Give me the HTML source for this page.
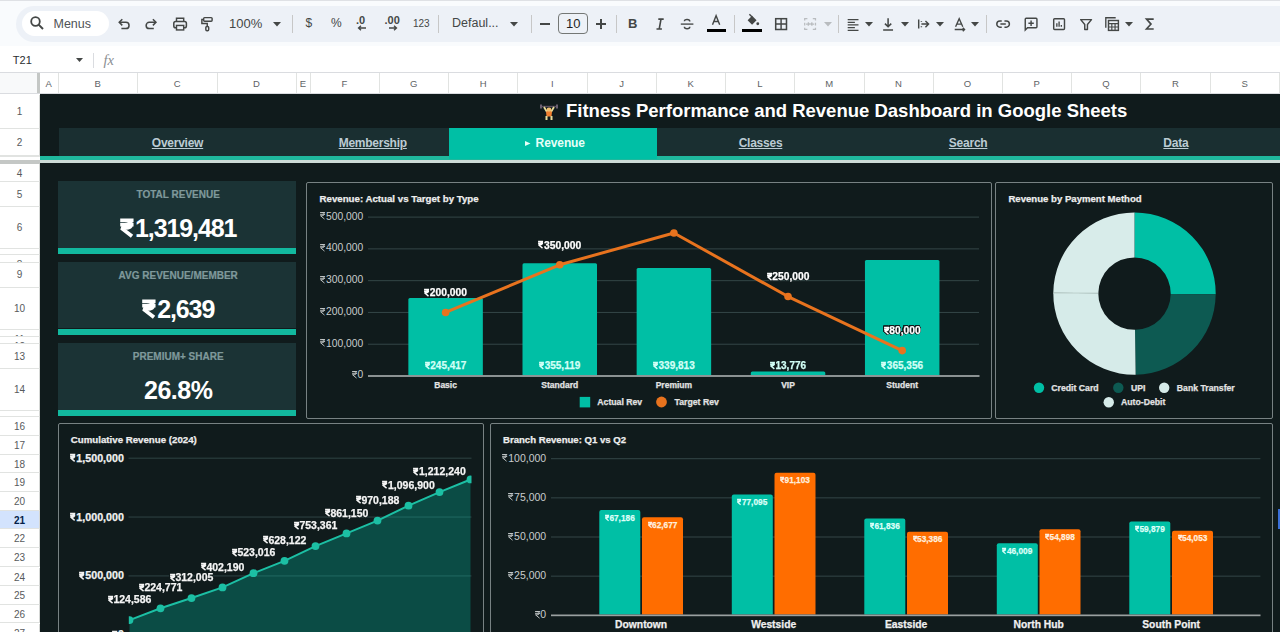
<!DOCTYPE html><html><head><meta charset="utf-8"><style>
*{margin:0;padding:0;box-sizing:border-box}
html,body{width:1280px;height:632px;overflow:hidden;background:#fff;font-family:"Liberation Sans",sans-serif}
.a{position:absolute}
.t{position:absolute;white-space:nowrap;line-height:1}
svg{display:block}
.rp{display:inline-block}
</style></head><body>

<div class="a" style="left:0;top:0;width:1280px;height:1px;background:#dfe1e5"></div>
<div class="a" style="left:0;top:1px;width:1280px;height:45px;background:#f9fbfd"></div>
<div class="a" style="left:16px;top:6px;width:1300px;height:36px;border-radius:18px;background:#edf1f7"></div>
<div class="a" style="left:22px;top:11px;width:87px;height:25px;border-radius:13px;background:#fff"></div>
<svg class="a" style="left:29px;top:15px" width="16" height="16" viewBox="0 0 16 16"><circle cx="6.5" cy="6.5" r="4.3" fill="none" stroke="#444746" stroke-width="1.8"/><path d="M9.6,9.6 L14,14" stroke="#444746" stroke-width="2"/></svg>
<div class="t" style="left:53.5px;top:17.5px;font-size:12.5px;color:#4f5356">Menus</div>
<svg class="a" style="left:116.4px;top:16.3px" width="16.2" height="16.2" viewBox="0 0 18 18"><path d="M4,7 H11 A3.5,3.5 0 0 1 11,14 H6" fill="none" stroke="#444746" stroke-width="1.7"/><path d="M7,3.6 L3.6,7 L7,10.4" fill="none" stroke="#444746" stroke-width="1.7"/></svg>
<svg class="a" style="left:143.4px;top:16.3px" width="16.2" height="16.2" viewBox="0 0 18 18"><path d="M14,7 H7 A3.5,3.5 0 0 0 7,14 H12" fill="none" stroke="#444746" stroke-width="1.7"/><path d="M11,3.6 L14.4,7 L11,10.4" fill="none" stroke="#444746" stroke-width="1.7"/></svg>
<svg class="a" style="left:171.9px;top:16.3px" width="16.2" height="16.2" viewBox="0 0 18 18"><path d="M5,6 V2.5 H13 V6" fill="none" stroke="#444746" stroke-width="1.6"/><rect x="2" y="6" width="14" height="7" rx="2" fill="none" stroke="#444746" stroke-width="1.7"/><rect x="5" y="10.5" width="8" height="5" fill="#edf1f7" stroke="#444746" stroke-width="1.6"/></svg>
<svg class="a" style="left:197.9px;top:16.3px" width="16.2" height="16.2" viewBox="0 0 18 18"><rect x="6.3" y="1.8" width="9.4" height="4" rx="1" fill="none" stroke="#444746" stroke-width="1.6"/><path d="M6.3,3.8 H4.3 V8.3 H10.3 V11.6" fill="none" stroke="#444746" stroke-width="1.6"/><rect x="8.7" y="11.6" width="3.2" height="4.8" rx="1.3" fill="none" stroke="#444746" stroke-width="1.6"/></svg>
<div class="t" style="left:229px;top:17px;font-size:13px;color:#444746">100%</div>
<svg class="a" style="left:272.5px;top:21.5px" width="8" height="5" viewBox="0 0 8 5"><path d="M0,0 H8 L4,4.5Z" fill="#444746"/></svg>
<div class="a" style="left:292px;top:15px;width:1px;height:18px;background:#c7c7c7"></div>
<div class="t" style="left:305.5px;top:17px;font-size:12px;color:#444746">$</div>
<div class="t" style="left:331px;top:17px;font-size:12px;color:#444746">%</div>
<div class="t" style="left:356px;top:15px;font-size:11px;font-weight:bold;color:#444746">.0</div>
<svg class="a" style="left:357px;top:25px" width="10" height="6" viewBox="0 0 10 6"><path d="M9,3 H2 M4,0.8 L1.5,3 L4,5.2" fill="none" stroke="#444746" stroke-width="1.3"/></svg>
<div class="t" style="left:384.5px;top:15px;font-size:11px;font-weight:bold;color:#444746">.00</div>
<svg class="a" style="left:388px;top:25px" width="10" height="6" viewBox="0 0 10 6"><path d="M1,3 H8 M6,0.8 L8.5,3 L6,5.2" fill="none" stroke="#444746" stroke-width="1.3"/></svg>
<div class="t" style="left:413px;top:18.5px;font-size:10px;color:#444746">123</div>
<div class="a" style="left:438px;top:15px;width:1px;height:18px;background:#c7c7c7"></div>
<div class="t" style="left:452px;top:17px;font-size:12.5px;color:#444746">Defaul...</div>
<svg class="a" style="left:510px;top:21.5px" width="8" height="5" viewBox="0 0 8 5"><path d="M0,0 H8 L4,4.5Z" fill="#444746"/></svg>
<div class="a" style="left:530.5px;top:15px;width:1px;height:18px;background:#c7c7c7"></div>
<div class="a" style="left:540px;top:23px;width:9.5px;height:1.6px;background:#444746"></div>
<div class="a" style="left:558px;top:13px;width:30px;height:21px;border:1px solid #747775;border-radius:4px"></div>
<div class="t" style="left:566px;top:17px;font-size:13px;color:#1f1f1f">10</div>
<div class="a" style="left:596px;top:23px;width:9.5px;height:1.6px;background:#444746"></div>
<div class="a" style="left:600px;top:18.5px;width:1.6px;height:10px;background:#444746"></div>
<div class="a" style="left:615.5px;top:15px;width:1px;height:18px;background:#c7c7c7"></div>
<div class="t" style="left:628px;top:17px;font-size:13px;font-weight:bold;color:#444746">B</div>
<svg class="a" style="left:651.9px;top:16.3px" width="16.2" height="16.2" viewBox="0 0 18 18"><path d="M7,3.5 H13 M5,14.5 H11 M10,3.5 L8,14.5" fill="none" stroke="#444746" stroke-width="1.8"/></svg>
<svg class="a" style="left:679.4px;top:16.3px" width="16.2" height="16.2" viewBox="0 0 18 18"><path d="M2,9 H16" stroke="#444746" stroke-width="1.5"/><path d="M12,6 C12,3.5 6,3 6,5.8 M6,12 C6,15 12,15 12,12" fill="none" stroke="#444746" stroke-width="1.6"/></svg>
<svg class="a" style="left:708.4px;top:13.4px" width="16.2" height="16.2" viewBox="0 0 18 18"><path d="M5,13 L9,3 L13,13 M6.5,9.5 H11.5" fill="none" stroke="#444746" stroke-width="1.6"/></svg>
<div class="a" style="left:707px;top:29px;width:19px;height:2.6px;background:#000"></div>
<div class="a" style="left:734px;top:15px;width:1px;height:18px;background:#c7c7c7"></div>
<svg class="a" style="left:743.9px;top:12.9px" width="16.2" height="16.2" viewBox="0 0 18 18"><path d="M4,8 L9,3 L14,8 L9,13 Z" fill="#444746"/><path d="M6,1.5 L9,4.5" stroke="#444746" stroke-width="1.6"/><circle cx="15.3" cy="12" r="1.6" fill="#444746"/></svg>
<div class="a" style="left:742px;top:29px;width:20px;height:2.6px;background:#000"></div>
<svg class="a" style="left:772.9px;top:16.3px" width="16.2" height="16.2" viewBox="0 0 18 18"><rect x="3" y="3" width="12" height="12" fill="none" stroke="#444746" stroke-width="1.7"/><path d="M9,3 V15 M3,9 H15" stroke="#444746" stroke-width="1.6"/></svg>
<svg class="a" style="left:801.9px;top:16.3px" width="16.2" height="16.2" viewBox="0 0 18 18"><path d="M3,5 V3 H6 M3,13 V15 H6 M15,5 V3 H12 M15,13 V15 H12 M3,7.5 V10.5 M15,7.5 V10.5 M4.5,9 H8 M6.5,7.3 L8.2,9 L6.5,10.7 M13.5,9 H10 M11.5,7.3 L9.8,9 L11.5,10.7" fill="none" stroke="#b9bcbf" stroke-width="1.4"/></svg>
<svg class="a" style="left:824px;top:21.5px" width="8" height="5" viewBox="0 0 8 5"><path d="M0,0 H8 L4,4.5Z" fill="#b9bcbf"/></svg>
<div class="a" style="left:837.5px;top:15px;width:1px;height:18px;background:#c7c7c7"></div>
<svg class="a" style="left:844.9px;top:16.3px" width="16.2" height="16.2" viewBox="0 0 18 18"><path d="M3,4 H15 M3,7 H11 M3,10 H15 M3,13 H11 M3,16 H15" stroke="#444746" stroke-width="1.4"/></svg>
<svg class="a" style="left:865px;top:21.5px" width="8" height="5" viewBox="0 0 8 5"><path d="M0,0 H8 L4,4.5Z" fill="#444746"/></svg>
<svg class="a" style="left:880.4px;top:16.3px" width="16.2" height="16.2" viewBox="0 0 18 18"><path d="M9,2.5 V12 M5.5,8.5 L9,12 L12.5,8.5 M3.5,15.5 H14.5" fill="none" stroke="#444746" stroke-width="1.7"/></svg>
<svg class="a" style="left:901px;top:21.5px" width="8" height="5" viewBox="0 0 8 5"><path d="M0,0 H8 L4,4.5Z" fill="#444746"/></svg>
<svg class="a" style="left:915.9px;top:16.3px" width="16.2" height="16.2" viewBox="0 0 18 18"><path d="M3,4 V14 M6,9 H14 M10.5,5.5 L14,9 L10.5,12.5 M6,5.5 V6.5 M6,11.5 V12.5" fill="none" stroke="#444746" stroke-width="1.6"/></svg>
<svg class="a" style="left:936px;top:21.5px" width="8" height="5" viewBox="0 0 8 5"><path d="M0,0 H8 L4,4.5Z" fill="#444746"/></svg>
<svg class="a" style="left:951.9px;top:16.3px" width="16.2" height="16.2" viewBox="0 0 18 18"><path d="M4,12 L8,3 L12,12 M5.3,9 H10.7 M3,15 H14 M12,13 L14,15 L12,17" fill="none" stroke="#444746" stroke-width="1.5"/></svg>
<svg class="a" style="left:971px;top:21.5px" width="8" height="5" viewBox="0 0 8 5"><path d="M0,0 H8 L4,4.5Z" fill="#444746"/></svg>
<div class="a" style="left:986px;top:15px;width:1px;height:18px;background:#c7c7c7"></div>
<svg class="a" style="left:994.9px;top:16.3px" width="16.2" height="16.2" viewBox="0 0 18 18"><path d="M7.5,5.5 H5.5 A3.5,3.5 0 0 0 5.5,12.5 H7.5 M10.5,5.5 H12.5 A3.5,3.5 0 0 1 12.5,12.5 H10.5 M6,9 H12" fill="none" stroke="#444746" stroke-width="1.7"/></svg>
<svg class="a" style="left:1022.9px;top:16.3px" width="16.2" height="16.2" viewBox="0 0 18 18"><path d="M2.5,15.5 V3.5 A1,1 0 0 1 3.5,2.5 H14.5 A1,1 0 0 1 15.5,3.5 V12 A1,1 0 0 1 14.5,13 H5 Z" fill="none" stroke="#444746" stroke-width="1.6"/><path d="M9,5 V11 M6,8 H12" stroke="#444746" stroke-width="1.6"/></svg>
<svg class="a" style="left:1050.9px;top:16.3px" width="16.2" height="16.2" viewBox="0 0 18 18"><rect x="3" y="3" width="12" height="12" rx="1" fill="none" stroke="#444746" stroke-width="1.6"/><path d="M6.5,8 V12 M9,6 V12 M11.5,10 V12" stroke="#444746" stroke-width="1.5"/></svg>
<svg class="a" style="left:1078.4px;top:16.3px" width="16.2" height="16.2" viewBox="0 0 18 18"><path d="M3,4 H15 L10.5,9.5 V15 H7.5 V9.5 Z" fill="none" stroke="#444746" stroke-width="1.6" stroke-linejoin="round"/></svg>
<svg class="a" style="left:1103.9px;top:16.3px" width="16.2" height="16.2" viewBox="0 0 18 18"><path d="M2,13 V2 H13" fill="none" stroke="#444746" stroke-width="1.5"/><rect x="5" y="5" width="11" height="11" fill="none" stroke="#444746" stroke-width="1.6"/><path d="M5,8.5 H16 M8.7,8.5 V16 M12.3,8.5 V16 M5,12.2 H16" stroke="#444746" stroke-width="1.3"/></svg>
<svg class="a" style="left:1125px;top:21.5px" width="8" height="5" viewBox="0 0 8 5"><path d="M0,0 H8 L4,4.5Z" fill="#444746"/></svg>
<svg class="a" style="left:1141.9px;top:16.3px" width="16.2" height="16.2" viewBox="0 0 18 18"><path d="M13,3.5 H5 L10,9 L5,14.5 H13" fill="none" stroke="#444746" stroke-width="1.8"/></svg>
<div class="t" style="left:12.8px;top:54.5px;font-size:11px;color:#2b2e31">T21</div>
<svg class="a" style="left:75.5px;top:57.5px" width="7" height="4.5" viewBox="0 0 7 4.5"><path d="M0,0 H7 L3.5,4Z" fill="#444746"/></svg>
<div class="a" style="left:93px;top:53px;width:1px;height:15px;background:#dadce0"></div>
<div class="t" style="left:103.5px;top:52.5px;font-size:14.5px;font-style:italic;font-family:'Liberation Serif',serif;color:#8a8e92">fx</div>
<div class="a" style="left:0;top:72px;width:1280px;height:1px;background:#dadce0"></div>
<div class="a" style="left:0;top:73px;width:37.5px;height:21px;background:#f8f9fa"></div>
<div class="a" style="left:37px;top:73px;width:3px;height:21px;background:#c4c7c5"></div>
<div class="a" style="left:40px;top:73px;width:18.5px;height:21px;border-right:1px solid #e1e3e1;color:#606366;font-size:9.5px;text-align:center;line-height:21px">A</div>
<div class="a" style="left:58.5px;top:73px;width:79.5px;height:21px;border-right:1px solid #e1e3e1;color:#606366;font-size:9.5px;text-align:center;line-height:21px">B</div>
<div class="a" style="left:138px;top:73px;width:79.5px;height:21px;border-right:1px solid #e1e3e1;color:#606366;font-size:9.5px;text-align:center;line-height:21px">C</div>
<div class="a" style="left:217.5px;top:73px;width:79px;height:21px;border-right:1px solid #e1e3e1;color:#606366;font-size:9.5px;text-align:center;line-height:21px">D</div>
<div class="a" style="left:296.5px;top:73px;width:14px;height:21px;border-right:1px solid #e1e3e1;color:#606366;font-size:9.5px;text-align:center;line-height:21px">E</div>
<div class="a" style="left:310.5px;top:73px;width:69px;height:21px;border-right:1px solid #e1e3e1;color:#606366;font-size:9.5px;text-align:center;line-height:21px">F</div>
<div class="a" style="left:379.5px;top:73px;width:69.5px;height:21px;border-right:1px solid #e1e3e1;color:#606366;font-size:9.5px;text-align:center;line-height:21px">G</div>
<div class="a" style="left:449px;top:73px;width:69.25px;height:21px;border-right:1px solid #e1e3e1;color:#606366;font-size:9.5px;text-align:center;line-height:21px">H</div>
<div class="a" style="left:518.25px;top:73px;width:69.25px;height:21px;border-right:1px solid #e1e3e1;color:#606366;font-size:9.5px;text-align:center;line-height:21px">I</div>
<div class="a" style="left:587.5px;top:73px;width:69px;height:21px;border-right:1px solid #e1e3e1;color:#606366;font-size:9.5px;text-align:center;line-height:21px">J</div>
<div class="a" style="left:656.5px;top:73px;width:69.25px;height:21px;border-right:1px solid #e1e3e1;color:#606366;font-size:9.5px;text-align:center;line-height:21px">K</div>
<div class="a" style="left:725.75px;top:73px;width:69.25px;height:21px;border-right:1px solid #e1e3e1;color:#606366;font-size:9.5px;text-align:center;line-height:21px">L</div>
<div class="a" style="left:795px;top:73px;width:69.5px;height:21px;border-right:1px solid #e1e3e1;color:#606366;font-size:9.5px;text-align:center;line-height:21px">M</div>
<div class="a" style="left:864.5px;top:73px;width:69px;height:21px;border-right:1px solid #e1e3e1;color:#606366;font-size:9.5px;text-align:center;line-height:21px">N</div>
<div class="a" style="left:933.5px;top:73px;width:69px;height:21px;border-right:1px solid #e1e3e1;color:#606366;font-size:9.5px;text-align:center;line-height:21px">O</div>
<div class="a" style="left:1002.5px;top:73px;width:69.25px;height:21px;border-right:1px solid #e1e3e1;color:#606366;font-size:9.5px;text-align:center;line-height:21px">P</div>
<div class="a" style="left:1071.75px;top:73px;width:69.5px;height:21px;border-right:1px solid #e1e3e1;color:#606366;font-size:9.5px;text-align:center;line-height:21px">Q</div>
<div class="a" style="left:1141.25px;top:73px;width:69.25px;height:21px;border-right:1px solid #e1e3e1;color:#606366;font-size:9.5px;text-align:center;line-height:21px">R</div>
<div class="a" style="left:1210.5px;top:73px;width:69.5px;height:21px;border-right:1px solid #e1e3e1;color:#606366;font-size:9.5px;text-align:center;line-height:21px">S</div>
<div class="a" style="left:0;top:93px;width:1280px;height:1px;background:#dadce0"></div>
<div class="a" style="left:0;top:94px;width:40px;height:538px;background:#fff"></div>
<div class="a" style="left:0;top:94.5px;width:40px;height:34.2px;background:#fff;border-bottom:1px solid #e1e3e1;border-right:1px solid #d5d7d5;color:#575a5c;font-weight:normal;font-size:10px;text-align:center;line-height:34.2px;overflow:hidden">1</div>
<div class="a" style="left:0;top:128.7px;width:40px;height:27.8px;background:#fff;border-bottom:1px solid #e1e3e1;border-right:1px solid #d5d7d5;color:#575a5c;font-weight:normal;font-size:10px;text-align:center;line-height:27.8px;overflow:hidden">2</div>
<div class="a" style="left:0;top:163.5px;width:40px;height:18px;background:#fff;border-bottom:1px solid #e1e3e1;border-right:1px solid #d5d7d5;color:#575a5c;font-weight:normal;font-size:10px;text-align:center;line-height:20px;overflow:hidden">4</div>
<div class="a" style="left:0;top:181.5px;width:40px;height:25.2px;background:#fff;border-bottom:1px solid #e1e3e1;border-right:1px solid #d5d7d5;color:#575a5c;font-weight:normal;font-size:10px;text-align:center;line-height:25.2px;overflow:hidden">5</div>
<div class="a" style="left:0;top:206.7px;width:40px;height:42px;background:#fff;border-bottom:1px solid #e1e3e1;border-right:1px solid #d5d7d5;color:#575a5c;font-weight:normal;font-size:10px;text-align:center;line-height:42px;overflow:hidden">6</div>
<div class="a" style="left:0;top:248.7px;width:40px;height:6.4px;background:#fff;border-bottom:1px solid #e1e3e1;border-right:1px solid #d5d7d5;color:#575a5c;font-weight:normal;font-size:10px;text-align:center;line-height:20px;overflow:hidden">7</div>
<div class="a" style="left:0;top:255.1px;width:40px;height:7.9px;background:#fff;border-bottom:1px solid #e1e3e1;border-right:1px solid #d5d7d5;color:#575a5c;font-weight:normal;font-size:10px;text-align:center;line-height:20px;overflow:hidden">8</div>
<div class="a" style="left:0;top:263px;width:40px;height:24.7px;background:#fff;border-bottom:1px solid #e1e3e1;border-right:1px solid #d5d7d5;color:#575a5c;font-weight:normal;font-size:10px;text-align:center;line-height:24.7px;overflow:hidden">9</div>
<div class="a" style="left:0;top:287.7px;width:40px;height:42.2px;background:#fff;border-bottom:1px solid #e1e3e1;border-right:1px solid #d5d7d5;color:#575a5c;font-weight:normal;font-size:10px;text-align:center;line-height:42.2px;overflow:hidden">10</div>
<div class="a" style="left:0;top:329.9px;width:40px;height:6.7px;background:#fff;border-bottom:1px solid #e1e3e1;border-right:1px solid #d5d7d5;color:#575a5c;font-weight:normal;font-size:10px;text-align:center;line-height:20px;overflow:hidden">11</div>
<div class="a" style="left:0;top:336.6px;width:40px;height:7.2px;background:#fff;border-bottom:1px solid #e1e3e1;border-right:1px solid #d5d7d5;color:#575a5c;font-weight:normal;font-size:10px;text-align:center;line-height:20px;overflow:hidden">12</div>
<div class="a" style="left:0;top:343.8px;width:40px;height:25.1px;background:#fff;border-bottom:1px solid #e1e3e1;border-right:1px solid #d5d7d5;color:#575a5c;font-weight:normal;font-size:10px;text-align:center;line-height:25.1px;overflow:hidden">13</div>
<div class="a" style="left:0;top:368.9px;width:40px;height:42.3px;background:#fff;border-bottom:1px solid #e1e3e1;border-right:1px solid #d5d7d5;color:#575a5c;font-weight:normal;font-size:10px;text-align:center;line-height:42.3px;overflow:hidden">14</div>
<div class="a" style="left:0;top:411.2px;width:40px;height:5.7px;background:#fff;border-bottom:1px solid #e1e3e1;border-right:1px solid #d5d7d5;color:#575a5c;font-weight:normal;font-size:10px;text-align:center;line-height:20px;overflow:hidden">15</div>
<div class="a" style="left:0;top:416.9px;width:40px;height:19.1px;background:#fff;border-bottom:1px solid #e1e3e1;border-right:1px solid #d5d7d5;color:#575a5c;font-weight:normal;font-size:10px;text-align:center;line-height:20px;overflow:hidden">16</div>
<div class="a" style="left:0;top:436px;width:40px;height:18.7px;background:#fff;border-bottom:1px solid #e1e3e1;border-right:1px solid #d5d7d5;color:#575a5c;font-weight:normal;font-size:10px;text-align:center;line-height:20px;overflow:hidden">17</div>
<div class="a" style="left:0;top:454.7px;width:40px;height:18.5px;background:#fff;border-bottom:1px solid #e1e3e1;border-right:1px solid #d5d7d5;color:#575a5c;font-weight:normal;font-size:10px;text-align:center;line-height:20px;overflow:hidden">18</div>
<div class="a" style="left:0;top:473.2px;width:40px;height:18.7px;background:#fff;border-bottom:1px solid #e1e3e1;border-right:1px solid #d5d7d5;color:#575a5c;font-weight:normal;font-size:10px;text-align:center;line-height:20px;overflow:hidden">19</div>
<div class="a" style="left:0;top:491.9px;width:40px;height:18.8px;background:#fff;border-bottom:1px solid #e1e3e1;border-right:1px solid #d5d7d5;color:#575a5c;font-weight:normal;font-size:10px;text-align:center;line-height:20px;overflow:hidden">20</div>
<div class="a" style="left:0;top:510.7px;width:40px;height:18.7px;background:#d3e3fd;border-bottom:1px solid #e1e3e1;border-right:1px solid #d5d7d5;color:#041e49;font-weight:bold;font-size:10px;text-align:center;line-height:20px;overflow:hidden">21</div>
<div class="a" style="left:0;top:529.4px;width:40px;height:18.9px;background:#fff;border-bottom:1px solid #e1e3e1;border-right:1px solid #d5d7d5;color:#575a5c;font-weight:normal;font-size:10px;text-align:center;line-height:20px;overflow:hidden">22</div>
<div class="a" style="left:0;top:548.3px;width:40px;height:19.2px;background:#fff;border-bottom:1px solid #e1e3e1;border-right:1px solid #d5d7d5;color:#575a5c;font-weight:normal;font-size:10px;text-align:center;line-height:20px;overflow:hidden">23</div>
<div class="a" style="left:0;top:567.5px;width:40px;height:18.5px;background:#fff;border-bottom:1px solid #e1e3e1;border-right:1px solid #d5d7d5;color:#575a5c;font-weight:normal;font-size:10px;text-align:center;line-height:20px;overflow:hidden">24</div>
<div class="a" style="left:0;top:586px;width:40px;height:18.9px;background:#fff;border-bottom:1px solid #e1e3e1;border-right:1px solid #d5d7d5;color:#575a5c;font-weight:normal;font-size:10px;text-align:center;line-height:20px;overflow:hidden">25</div>
<div class="a" style="left:0;top:604.9px;width:40px;height:18.6px;background:#fff;border-bottom:1px solid #e1e3e1;border-right:1px solid #d5d7d5;color:#575a5c;font-weight:normal;font-size:10px;text-align:center;line-height:20px;overflow:hidden">26</div>
<div class="a" style="left:0;top:623.5px;width:40px;height:18.6px;background:#fff;border-bottom:1px solid #e1e3e1;border-right:1px solid #d5d7d5;color:#575a5c;font-weight:normal;font-size:10px;text-align:center;line-height:20px;overflow:hidden">27</div>
<div class="a" style="left:0;top:156px;width:40px;height:1px;background:#e1e3e1"></div>
<div class="a" style="left:0;top:157px;width:40px;height:2.3px;background:#fff"></div>
<div class="a" style="left:0;top:159.5px;width:40px;height:4px;background:#c4c7c5"></div>
<div class="a" style="left:40px;top:94px;width:1240px;height:538px;background:#101b1c"></div>
<div class="t" style="left:566px;top:102px;font-size:18.5px;font-weight:bold;color:#fff">Fitness Performance and Revenue Dashboard in Google Sheets</div>
<svg class="a" style="left:539.5px;top:102.5px" width="18" height="17.5" viewBox="0 0 18 17.5"><path d="M0.5,3.5 L17.5,3.5" stroke="#5a5060" stroke-width="1.4"/><rect x="0" y="1.5" width="2" height="4" fill="#6a6070"/><rect x="16" y="1.5" width="2" height="4" fill="#6a6070"/><path d="M4,4 L7,9 M14,4 L11,9" stroke="#e8dc9a" stroke-width="1.8"/><circle cx="9" cy="7" r="2.4" fill="#f0c070"/><path d="M6,8.5 H12 L11.5,13.5 H6.5 Z" fill="#f08030"/><path d="M6.5,13 V17 M11.5,13 V17" stroke="#e8dc9a" stroke-width="2"/></svg>
<div class="a" style="left:58.5px;top:128.2px;width:1221.5px;height:27.8px;background:#1a2f31"></div>
<div class="t" style="left:58.5px;top:136.5px;width:238px;text-align:center;font-size:12px;letter-spacing:-0.25px;font-weight:bold;color:#bccbd3;text-decoration:underline">Overview</div>
<div class="t" style="left:296.5px;top:136.5px;width:152.5px;text-align:center;font-size:12px;letter-spacing:-0.25px;font-weight:bold;color:#bccbd3;text-decoration:underline">Membership</div>
<div class="a" style="left:449px;top:128.2px;width:207.5px;height:31px;background:#00bfa5"></div>
<svg class="a" style="left:525.3px;top:140.5px" width="5.5" height="5" viewBox="0 0 5.5 5"><path d="M0,0 L5.5,2.5 L0,5 Z" fill="#e6fff8"/></svg>
<div class="t" style="left:535.6px;top:136.5px;font-size:12px;letter-spacing:-0.1px;font-weight:bold;color:#e6fff8">Revenue</div>
<div class="t" style="left:656.5px;top:136.5px;width:208px;text-align:center;font-size:12px;letter-spacing:-0.25px;font-weight:bold;color:#bccbd3;text-decoration:underline">Classes</div>
<div class="t" style="left:864.5px;top:136.5px;width:207.25px;text-align:center;font-size:12px;letter-spacing:-0.25px;font-weight:bold;color:#bccbd3;text-decoration:underline">Search</div>
<div class="t" style="left:1071.75px;top:136.5px;width:208.25px;text-align:center;font-size:12px;letter-spacing:-0.25px;font-weight:bold;color:#bccbd3;text-decoration:underline">Data</div>
<div class="a" style="left:40px;top:156px;width:1240px;height:4px;background:#1fb89d"></div>
<div class="a" style="left:449px;top:156px;width:207.5px;height:3px;background:#00bfa5"></div>
<div class="a" style="left:40px;top:160px;width:1240px;height:3px;background:#cddbd7"></div>
<div class="a" style="left:58px;top:180.6px;width:238px;height:67px;background:#1b3335"></div>
<div class="a" style="left:58px;top:247.6px;width:238px;height:6.8px;background:#12b89e"></div>
<div class="t" style="left:59.2px;top:189.7px;width:238px;text-align:center;font-size:10px;font-weight:bold;color:#7f999b;-webkit-text-stroke:0.2px #7f999b">TOTAL REVENUE</div>
<div class="t" style="left:59.2px;top:215.54px;width:238px;text-align:center;font-size:25px;font-weight:bold;color:#fff;letter-spacing:-1.1px"><svg class="rp" width="13.75" height="18" viewBox="0 0 13.5 18" preserveAspectRatio="none" style="overflow:visible;margin-right:1.25px"><path d="M0.2,1.25 H13.3 M0.2,5.6 H13.3 M4.5,1.25 C10,1.25 10.9,3.6 10.9,5.6 C10.9,7.6 9.2,9.1 5.2,9.1 H1.4 L11.8,17.2" fill="none" stroke="#fff" stroke-width="3.7" stroke-linejoin="bevel"/></svg>1,319,481</div>
<div class="a" style="left:58px;top:261.7px;width:238px;height:66.8px;background:#1b3335"></div>
<div class="a" style="left:58px;top:328.5px;width:238px;height:6.8px;background:#12b89e"></div>
<div class="t" style="left:59.2px;top:270.8px;width:238px;text-align:center;font-size:10px;font-weight:bold;color:#7f999b;-webkit-text-stroke:0.2px #7f999b">AVG REVENUE/MEMBER</div>
<div class="t" style="left:59.2px;top:296.64px;width:238px;text-align:center;font-size:25px;font-weight:bold;color:#fff;letter-spacing:-1.1px"><svg class="rp" width="13.75" height="18" viewBox="0 0 13.5 18" preserveAspectRatio="none" style="overflow:visible;margin-right:1.25px"><path d="M0.2,1.25 H13.3 M0.2,5.6 H13.3 M4.5,1.25 C10,1.25 10.9,3.6 10.9,5.6 C10.9,7.6 9.2,9.1 5.2,9.1 H1.4 L11.8,17.2" fill="none" stroke="#fff" stroke-width="3.7" stroke-linejoin="bevel"/></svg>2,639</div>
<div class="a" style="left:58px;top:342.8px;width:238px;height:67.3px;background:#1b3335"></div>
<div class="a" style="left:58px;top:410.1px;width:238px;height:6.3px;background:#12b89e"></div>
<div class="t" style="left:59.2px;top:351.9px;width:238px;text-align:center;font-size:10px;font-weight:bold;color:#7f999b;-webkit-text-stroke:0.2px #7f999b">PREMIUM+ SHARE</div>
<div class="t" style="left:59.2px;top:377.74px;width:238px;text-align:center;font-size:25px;font-weight:bold;color:#fff;letter-spacing:-0.5px">26.8%</div>
<div class="a" style="left:306px;top:182px;width:686px;height:237px;border:1px solid #788283;border-radius:2px"></div>
<div class="a" style="left:995px;top:182px;width:278px;height:237px;border:1px solid #788283;border-radius:2px"></div>
<div class="a" style="left:58px;top:423px;width:426px;height:217px;border:1px solid #788283;border-radius:2px"></div>
<div class="a" style="left:490px;top:423px;width:783px;height:217px;border:1px solid #788283;border-radius:2px"></div>
<div class="a" style="left:1278.3px;top:508.5px;width:1.7px;height:20.5px;background:#3a6fd8"></div>
<div class="t" style="left:319.5px;top:194.49px;font-size:9.7px;color:#eeeeee;font-weight:bold;-webkit-text-stroke:0.25px #eeeeee;">Revenue: Actual vs Target by Type</div>
<div class="t" style="left:63.3px;width:300px;text-align:right;top:370.48px;font-size:10.3px;color:#c9cdcd;font-weight:normal;"><svg class="rp" width="5.15" height="7.42" viewBox="0 0 13.5 18" preserveAspectRatio="none" style="overflow:visible;margin-right:0.52px"><path d="M0.2,1.25 H13.3 M0.2,5.6 H13.3 M4.5,1.25 C10,1.25 10.9,3.6 10.9,5.6 C10.9,7.6 9.2,9.1 5.2,9.1 H1.4 L11.8,17.2" fill="none" stroke="#c9cdcd" stroke-width="2.3" stroke-linejoin="bevel"/></svg>0</div>
<div class="t" style="left:63.3px;width:300px;text-align:right;top:338.7px;font-size:10.3px;color:#c9cdcd;font-weight:normal;"><svg class="rp" width="5.15" height="7.42" viewBox="0 0 13.5 18" preserveAspectRatio="none" style="overflow:visible;margin-right:0.52px"><path d="M0.2,1.25 H13.3 M0.2,5.6 H13.3 M4.5,1.25 C10,1.25 10.9,3.6 10.9,5.6 C10.9,7.6 9.2,9.1 5.2,9.1 H1.4 L11.8,17.2" fill="none" stroke="#c9cdcd" stroke-width="2.3" stroke-linejoin="bevel"/></svg>100,000</div>
<div class="t" style="left:63.3px;width:300px;text-align:right;top:306.92px;font-size:10.3px;color:#c9cdcd;font-weight:normal;"><svg class="rp" width="5.15" height="7.42" viewBox="0 0 13.5 18" preserveAspectRatio="none" style="overflow:visible;margin-right:0.52px"><path d="M0.2,1.25 H13.3 M0.2,5.6 H13.3 M4.5,1.25 C10,1.25 10.9,3.6 10.9,5.6 C10.9,7.6 9.2,9.1 5.2,9.1 H1.4 L11.8,17.2" fill="none" stroke="#c9cdcd" stroke-width="2.3" stroke-linejoin="bevel"/></svg>200,000</div>
<div class="t" style="left:63.3px;width:300px;text-align:right;top:275.14px;font-size:10.3px;color:#c9cdcd;font-weight:normal;"><svg class="rp" width="5.15" height="7.42" viewBox="0 0 13.5 18" preserveAspectRatio="none" style="overflow:visible;margin-right:0.52px"><path d="M0.2,1.25 H13.3 M0.2,5.6 H13.3 M4.5,1.25 C10,1.25 10.9,3.6 10.9,5.6 C10.9,7.6 9.2,9.1 5.2,9.1 H1.4 L11.8,17.2" fill="none" stroke="#c9cdcd" stroke-width="2.3" stroke-linejoin="bevel"/></svg>300,000</div>
<div class="t" style="left:63.3px;width:300px;text-align:right;top:243.36px;font-size:10.3px;color:#c9cdcd;font-weight:normal;"><svg class="rp" width="5.15" height="7.42" viewBox="0 0 13.5 18" preserveAspectRatio="none" style="overflow:visible;margin-right:0.52px"><path d="M0.2,1.25 H13.3 M0.2,5.6 H13.3 M4.5,1.25 C10,1.25 10.9,3.6 10.9,5.6 C10.9,7.6 9.2,9.1 5.2,9.1 H1.4 L11.8,17.2" fill="none" stroke="#c9cdcd" stroke-width="2.3" stroke-linejoin="bevel"/></svg>400,000</div>
<div class="t" style="left:63.3px;width:300px;text-align:right;top:211.58px;font-size:10.3px;color:#c9cdcd;font-weight:normal;"><svg class="rp" width="5.15" height="7.42" viewBox="0 0 13.5 18" preserveAspectRatio="none" style="overflow:visible;margin-right:0.52px"><path d="M0.2,1.25 H13.3 M0.2,5.6 H13.3 M4.5,1.25 C10,1.25 10.9,3.6 10.9,5.6 C10.9,7.6 9.2,9.1 5.2,9.1 H1.4 L11.8,17.2" fill="none" stroke="#c9cdcd" stroke-width="2.3" stroke-linejoin="bevel"/></svg>500,000</div>
<div class="t" style="left:1008.4px;top:194.17px;font-size:9.6px;color:#eeeeee;font-weight:bold;-webkit-text-stroke:0.25px #eeeeee;">Revenue by Payment Method</div>
<div class="t" style="left:70.8px;top:435.29px;font-size:9.7px;color:#eeeeee;font-weight:bold;-webkit-text-stroke:0.25px #eeeeee;">Cumulative Revenue (2024)</div>
<div class="t" style="left:503px;top:435.47px;font-size:9.6px;color:#eeeeee;font-weight:bold;-webkit-text-stroke:0.25px #eeeeee;">Branch Revenue: Q1 vs Q2</div>
<div class="t" style="left:246.2px;width:300px;text-align:right;top:609.41px;font-size:10.5px;color:#c9cdcd;font-weight:normal;"><svg class="rp" width="5.25" height="7.56" viewBox="0 0 13.5 18" preserveAspectRatio="none" style="overflow:visible;margin-right:0.53px"><path d="M0.2,1.25 H13.3 M0.2,5.6 H13.3 M4.5,1.25 C10,1.25 10.9,3.6 10.9,5.6 C10.9,7.6 9.2,9.1 5.2,9.1 H1.4 L11.8,17.2" fill="none" stroke="#c9cdcd" stroke-width="2.3" stroke-linejoin="bevel"/></svg>0</div>
<div class="t" style="left:246.2px;width:300px;text-align:right;top:570.26px;font-size:10.5px;color:#c9cdcd;font-weight:normal;"><svg class="rp" width="5.25" height="7.56" viewBox="0 0 13.5 18" preserveAspectRatio="none" style="overflow:visible;margin-right:0.53px"><path d="M0.2,1.25 H13.3 M0.2,5.6 H13.3 M4.5,1.25 C10,1.25 10.9,3.6 10.9,5.6 C10.9,7.6 9.2,9.1 5.2,9.1 H1.4 L11.8,17.2" fill="none" stroke="#c9cdcd" stroke-width="2.3" stroke-linejoin="bevel"/></svg>25,000</div>
<div class="t" style="left:246.2px;width:300px;text-align:right;top:531.11px;font-size:10.5px;color:#c9cdcd;font-weight:normal;"><svg class="rp" width="5.25" height="7.56" viewBox="0 0 13.5 18" preserveAspectRatio="none" style="overflow:visible;margin-right:0.53px"><path d="M0.2,1.25 H13.3 M0.2,5.6 H13.3 M4.5,1.25 C10,1.25 10.9,3.6 10.9,5.6 C10.9,7.6 9.2,9.1 5.2,9.1 H1.4 L11.8,17.2" fill="none" stroke="#c9cdcd" stroke-width="2.3" stroke-linejoin="bevel"/></svg>50,000</div>
<div class="t" style="left:246.2px;width:300px;text-align:right;top:491.96px;font-size:10.5px;color:#c9cdcd;font-weight:normal;"><svg class="rp" width="5.25" height="7.56" viewBox="0 0 13.5 18" preserveAspectRatio="none" style="overflow:visible;margin-right:0.53px"><path d="M0.2,1.25 H13.3 M0.2,5.6 H13.3 M4.5,1.25 C10,1.25 10.9,3.6 10.9,5.6 C10.9,7.6 9.2,9.1 5.2,9.1 H1.4 L11.8,17.2" fill="none" stroke="#c9cdcd" stroke-width="2.3" stroke-linejoin="bevel"/></svg>75,000</div>
<div class="t" style="left:246.2px;width:300px;text-align:right;top:452.81px;font-size:10.5px;color:#c9cdcd;font-weight:normal;"><svg class="rp" width="5.25" height="7.56" viewBox="0 0 13.5 18" preserveAspectRatio="none" style="overflow:visible;margin-right:0.53px"><path d="M0.2,1.25 H13.3 M0.2,5.6 H13.3 M4.5,1.25 C10,1.25 10.9,3.6 10.9,5.6 C10.9,7.6 9.2,9.1 5.2,9.1 H1.4 L11.8,17.2" fill="none" stroke="#c9cdcd" stroke-width="2.3" stroke-linejoin="bevel"/></svg>100,000</div>
<svg class="a" style="left:0;top:0" width="1280" height="632" viewBox="0 0 1280 632"><rect x="368" y="343.72" width="611" height="1" fill="#344647"/><rect x="368" y="311.94" width="611" height="1" fill="#344647"/><rect x="368" y="280.16" width="611" height="1" fill="#344647"/><rect x="368" y="248.38" width="611" height="1" fill="#344647"/><rect x="368" y="216.6" width="611" height="1" fill="#344647"/><path d="M408.35,375.2 V299.51 Q408.35,298.01 409.85,298.01 H481.35 Q482.85,298.01 482.85,299.51 V375.2 Z" fill="#00bfa5"/><path d="M522.5,375.2 V264.64 Q522.5,263.14 524,263.14 H595.5 Q597,263.14 597,264.64 V375.2 Z" fill="#00bfa5"/><path d="M636.65,375.2 V269.51 Q636.65,268.01 638.15,268.01 H709.65 Q711.15,268.01 711.15,269.51 V375.2 Z" fill="#00bfa5"/><path d="M750.8,375.2 V373.12 Q750.8,371.62 752.3,371.62 H823.8 Q825.3,371.62 825.3,373.12 V375.2 Z" fill="#00bfa5"/><path d="M864.95,375.2 V261.39 Q864.95,259.89 866.45,259.89 H937.95 Q939.45,259.89 939.45,261.39 V375.2 Z" fill="#00bfa5"/><rect x="368" y="375.1" width="611.5" height="1.8" fill="#9aa0a0"/><polyline points="445.6,312.44 559.75,264.77 673.9,232.99 788.05,296.55 902.2,350.58" fill="none" stroke="#e8731e" stroke-width="3" stroke-linejoin="round"/><circle cx="445.6" cy="312.44" r="3.8" fill="#e8731e"/><circle cx="559.75" cy="264.77" r="3.8" fill="#e8731e"/><circle cx="673.9" cy="232.99" r="3.8" fill="#e8731e"/><circle cx="788.05" cy="296.55" r="3.8" fill="#e8731e"/><circle cx="902.2" cy="350.58" r="3.8" fill="#e8731e"/><rect x="579.7" y="396.9" width="10.5" height="10.5" fill="#00bfa5"/><circle cx="661.5" cy="402" r="5.4" fill="#e8731e"/><path d="M1134.5,212.4 A81.2,81.2 0 0 1 1215.7,294.31 L1170.7,293.92 A36.2,36.2 0 0 0 1134.5,257.4 Z" fill="#00bfa5"/><path d="M1215.7,294.31 A81.2,81.2 0 0 1 1135.63,374.79 L1135.01,329.8 A36.2,36.2 0 0 0 1170.7,293.92 Z" fill="#0d5a52"/><path d="M1135.63,374.79 A81.2,81.2 0 0 1 1053.3,292.75 L1098.3,293.22 A36.2,36.2 0 0 0 1135.01,329.8 Z" fill="#d6ebe9"/><path d="M1053.3,292.75 A81.2,81.2 0 0 1 1134.5,212.4 L1134.5,257.4 A36.2,36.2 0 0 0 1098.3,293.22 Z" fill="#d8ecea"/><rect x="1053.3" y="292.6" width="45" height="0.9" fill="#b9cdc9"/><circle cx="1039" cy="387.8" r="5.2" fill="#00bfa5"/><circle cx="1118.3" cy="387.8" r="5.2" fill="#0d5a52"/><circle cx="1164.2" cy="387.8" r="5.2" fill="#d6ebe9"/><circle cx="1108.75" cy="402.3" r="5.2" fill="#d6ebe9"/><rect x="128.5" y="634.15" width="343" height="1.2" fill="#2a3d3e"/><rect x="128.5" y="575.3" width="343" height="1.2" fill="#2a3d3e"/><rect x="128.5" y="516.45" width="343" height="1.2" fill="#2a3d3e"/><rect x="128.5" y="457.6" width="343" height="1.2" fill="#2a3d3e"/><clipPath id="c3"><rect x="128.8" y="440" width="342.7" height="200"/></clipPath><g clip-path="url(#c3)"><path d="M129.5,634.75 L129.5,620.09 L160.5,608.29 L191.5,598.03 L222.5,587.41 L253.5,573.19 L284.5,560.82 L315.5,546.08 L346.5,533.39 L377.5,520.56 L408.5,505.64 L439.5,492.07 L470.5,479.45 L470.5,634.75 Z" fill="#00bfa5" fill-opacity="0.3"/><polyline points="129.5,620.09 160.5,608.29 191.5,598.03 222.5,587.41 253.5,573.19 284.5,560.82 315.5,546.08 346.5,533.39 377.5,520.56 408.5,505.64 439.5,492.07 470.5,479.45" fill="none" stroke="#1cbfa4" stroke-width="2"/><circle cx="129.5" cy="620.09" r="3.9" fill="#1cbfa4"/><circle cx="160.5" cy="608.29" r="3.9" fill="#1cbfa4"/><circle cx="191.5" cy="598.03" r="3.9" fill="#1cbfa4"/><circle cx="222.5" cy="587.41" r="3.9" fill="#1cbfa4"/><circle cx="253.5" cy="573.19" r="3.9" fill="#1cbfa4"/><circle cx="284.5" cy="560.82" r="3.9" fill="#1cbfa4"/><circle cx="315.5" cy="546.08" r="3.9" fill="#1cbfa4"/><circle cx="346.5" cy="533.39" r="3.9" fill="#1cbfa4"/><circle cx="377.5" cy="520.56" r="3.9" fill="#1cbfa4"/><circle cx="408.5" cy="505.64" r="3.9" fill="#1cbfa4"/><circle cx="439.5" cy="492.07" r="3.9" fill="#1cbfa4"/><circle cx="470.5" cy="479.45" r="3.9" fill="#1cbfa4"/></g><rect x="551" y="575.65" width="709.4" height="1" fill="#344647"/><rect x="551" y="536.5" width="709.4" height="1" fill="#344647"/><rect x="551" y="497.35" width="709.4" height="1" fill="#344647"/><rect x="551" y="458.2" width="709.4" height="1" fill="#344647"/><path d="M599.3,614.6 V512.09 Q599.3,510.09 601.3,510.09 H638.3 Q640.3,510.09 640.3,512.09 V614.6 Z" fill="#00bfa5"/><path d="M642,614.6 V519.15 Q642,517.15 644,517.15 H681 Q683,517.15 683,519.15 V614.6 Z" fill="#ff6d00"/><path d="M731.8,614.6 V496.57 Q731.8,494.57 733.8,494.57 H770.8 Q772.8,494.57 772.8,496.57 V614.6 Z" fill="#00bfa5"/><path d="M774.5,614.6 V474.63 Q774.5,472.63 776.5,472.63 H813.5 Q815.5,472.63 815.5,474.63 V614.6 Z" fill="#ff6d00"/><path d="M864.3,614.6 V520.46 Q864.3,518.46 866.3,518.46 H903.3 Q905.3,518.46 905.3,520.46 V614.6 Z" fill="#00bfa5"/><path d="M907,614.6 V533.7 Q907,531.7 909,531.7 H946 Q948,531.7 948,533.7 V614.6 Z" fill="#ff6d00"/><path d="M996.8,614.6 V545.25 Q996.8,543.25 998.8,543.25 H1035.8 Q1037.8,543.25 1037.8,545.25 V614.6 Z" fill="#00bfa5"/><path d="M1039.5,614.6 V531.33 Q1039.5,529.33 1041.5,529.33 H1078.5 Q1080.5,529.33 1080.5,531.33 V614.6 Z" fill="#ff6d00"/><path d="M1129.3,614.6 V523.53 Q1129.3,521.53 1131.3,521.53 H1168.3 Q1170.3,521.53 1170.3,523.53 V614.6 Z" fill="#00bfa5"/><path d="M1172,614.6 V532.65 Q1172,530.65 1174,530.65 H1211 Q1213,530.65 1213,532.65 V614.6 Z" fill="#ff6d00"/><rect x="551" y="614.5" width="709.5" height="1.7" fill="#9aa0a0"/></svg>
<div class="t" style="left:295.6px;width:300px;text-align:center;top:361.24px;font-size:10px;color:#d2fff6;font-weight:bold;-webkit-text-stroke:0.25px #d2fff6;"><svg class="rp" width="5" height="7.2" viewBox="0 0 13.5 18" preserveAspectRatio="none" style="overflow:visible;margin-right:0.5px"><path d="M0.2,1.25 H13.3 M0.2,5.6 H13.3 M4.5,1.25 C10,1.25 10.9,3.6 10.9,5.6 C10.9,7.6 9.2,9.1 5.2,9.1 H1.4 L11.8,17.2" fill="none" stroke="#d2fff6" stroke-width="3.7" stroke-linejoin="bevel"/></svg>245,417</div>
<div class="t" style="left:295.6px;width:300px;text-align:center;top:288.22px;font-size:10.3px;color:#ffffff;font-weight:bold;-webkit-text-stroke:0.25px #ffffff;filter:drop-shadow(0.7px 0 0 #101b1c) drop-shadow(-0.7px 0 0 #101b1c) drop-shadow(0 0.7px 0 #101b1c) drop-shadow(0 -0.7px 0 #101b1c);"><svg class="rp" width="5.15" height="7.42" viewBox="0 0 13.5 18" preserveAspectRatio="none" style="overflow:visible;margin-right:0.52px"><path d="M0.2,1.25 H13.3 M0.2,5.6 H13.3 M4.5,1.25 C10,1.25 10.9,3.6 10.9,5.6 C10.9,7.6 9.2,9.1 5.2,9.1 H1.4 L11.8,17.2" fill="none" stroke="#ffffff" stroke-width="3.7" stroke-linejoin="bevel"/></svg>200,000</div>
<div class="t" style="left:295.6px;width:300px;text-align:center;top:380.5px;font-size:8.5px;color:#e3e3e3;font-weight:bold;-webkit-text-stroke:0.25px #e3e3e3;">Basic</div>
<div class="t" style="left:409.75px;width:300px;text-align:center;top:361.24px;font-size:10px;color:#d2fff6;font-weight:bold;-webkit-text-stroke:0.25px #d2fff6;"><svg class="rp" width="5" height="7.2" viewBox="0 0 13.5 18" preserveAspectRatio="none" style="overflow:visible;margin-right:0.5px"><path d="M0.2,1.25 H13.3 M0.2,5.6 H13.3 M4.5,1.25 C10,1.25 10.9,3.6 10.9,5.6 C10.9,7.6 9.2,9.1 5.2,9.1 H1.4 L11.8,17.2" fill="none" stroke="#d2fff6" stroke-width="3.7" stroke-linejoin="bevel"/></svg>355,119</div>
<div class="t" style="left:409.75px;width:300px;text-align:center;top:240.55px;font-size:10.3px;color:#ffffff;font-weight:bold;-webkit-text-stroke:0.25px #ffffff;filter:drop-shadow(0.7px 0 0 #101b1c) drop-shadow(-0.7px 0 0 #101b1c) drop-shadow(0 0.7px 0 #101b1c) drop-shadow(0 -0.7px 0 #101b1c);"><svg class="rp" width="5.15" height="7.42" viewBox="0 0 13.5 18" preserveAspectRatio="none" style="overflow:visible;margin-right:0.52px"><path d="M0.2,1.25 H13.3 M0.2,5.6 H13.3 M4.5,1.25 C10,1.25 10.9,3.6 10.9,5.6 C10.9,7.6 9.2,9.1 5.2,9.1 H1.4 L11.8,17.2" fill="none" stroke="#ffffff" stroke-width="3.7" stroke-linejoin="bevel"/></svg>350,000</div>
<div class="t" style="left:409.75px;width:300px;text-align:center;top:380.5px;font-size:8.5px;color:#e3e3e3;font-weight:bold;-webkit-text-stroke:0.25px #e3e3e3;">Standard</div>
<div class="t" style="left:523.9px;width:300px;text-align:center;top:361.24px;font-size:10px;color:#d2fff6;font-weight:bold;-webkit-text-stroke:0.25px #d2fff6;"><svg class="rp" width="5" height="7.2" viewBox="0 0 13.5 18" preserveAspectRatio="none" style="overflow:visible;margin-right:0.5px"><path d="M0.2,1.25 H13.3 M0.2,5.6 H13.3 M4.5,1.25 C10,1.25 10.9,3.6 10.9,5.6 C10.9,7.6 9.2,9.1 5.2,9.1 H1.4 L11.8,17.2" fill="none" stroke="#d2fff6" stroke-width="3.7" stroke-linejoin="bevel"/></svg>339,813</div>
<div class="t" style="left:523.9px;width:300px;text-align:center;top:380.5px;font-size:8.5px;color:#e3e3e3;font-weight:bold;-webkit-text-stroke:0.25px #e3e3e3;">Premium</div>
<div class="t" style="left:638.05px;width:300px;text-align:center;top:361.24px;font-size:10px;color:#d2fff6;font-weight:bold;-webkit-text-stroke:0.25px #d2fff6;filter:drop-shadow(0.7px 0 0 #101b1c) drop-shadow(-0.7px 0 0 #101b1c) drop-shadow(0 0.7px 0 #101b1c) drop-shadow(0 -0.7px 0 #101b1c);"><svg class="rp" width="5" height="7.2" viewBox="0 0 13.5 18" preserveAspectRatio="none" style="overflow:visible;margin-right:0.5px"><path d="M0.2,1.25 H13.3 M0.2,5.6 H13.3 M4.5,1.25 C10,1.25 10.9,3.6 10.9,5.6 C10.9,7.6 9.2,9.1 5.2,9.1 H1.4 L11.8,17.2" fill="none" stroke="#d2fff6" stroke-width="3.7" stroke-linejoin="bevel"/></svg>13,776</div>
<div class="t" style="left:638.05px;width:300px;text-align:center;top:272.33px;font-size:10.3px;color:#ffffff;font-weight:bold;-webkit-text-stroke:0.25px #ffffff;filter:drop-shadow(0.7px 0 0 #101b1c) drop-shadow(-0.7px 0 0 #101b1c) drop-shadow(0 0.7px 0 #101b1c) drop-shadow(0 -0.7px 0 #101b1c);"><svg class="rp" width="5.15" height="7.42" viewBox="0 0 13.5 18" preserveAspectRatio="none" style="overflow:visible;margin-right:0.52px"><path d="M0.2,1.25 H13.3 M0.2,5.6 H13.3 M4.5,1.25 C10,1.25 10.9,3.6 10.9,5.6 C10.9,7.6 9.2,9.1 5.2,9.1 H1.4 L11.8,17.2" fill="none" stroke="#ffffff" stroke-width="3.7" stroke-linejoin="bevel"/></svg>250,000</div>
<div class="t" style="left:638.05px;width:300px;text-align:center;top:380.5px;font-size:8.5px;color:#e3e3e3;font-weight:bold;-webkit-text-stroke:0.25px #e3e3e3;">VIP</div>
<div class="t" style="left:752.2px;width:300px;text-align:center;top:361.24px;font-size:10px;color:#d2fff6;font-weight:bold;-webkit-text-stroke:0.25px #d2fff6;"><svg class="rp" width="5" height="7.2" viewBox="0 0 13.5 18" preserveAspectRatio="none" style="overflow:visible;margin-right:0.5px"><path d="M0.2,1.25 H13.3 M0.2,5.6 H13.3 M4.5,1.25 C10,1.25 10.9,3.6 10.9,5.6 C10.9,7.6 9.2,9.1 5.2,9.1 H1.4 L11.8,17.2" fill="none" stroke="#d2fff6" stroke-width="3.7" stroke-linejoin="bevel"/></svg>365,356</div>
<div class="t" style="left:752.2px;width:300px;text-align:center;top:326.36px;font-size:10.3px;color:#ffffff;font-weight:bold;-webkit-text-stroke:0.25px #ffffff;filter:drop-shadow(0.7px 0 0 #101b1c) drop-shadow(-0.7px 0 0 #101b1c) drop-shadow(0 0.7px 0 #101b1c) drop-shadow(0 -0.7px 0 #101b1c);"><svg class="rp" width="5.15" height="7.42" viewBox="0 0 13.5 18" preserveAspectRatio="none" style="overflow:visible;margin-right:0.52px"><path d="M0.2,1.25 H13.3 M0.2,5.6 H13.3 M4.5,1.25 C10,1.25 10.9,3.6 10.9,5.6 C10.9,7.6 9.2,9.1 5.2,9.1 H1.4 L11.8,17.2" fill="none" stroke="#ffffff" stroke-width="3.7" stroke-linejoin="bevel"/></svg>80,000</div>
<div class="t" style="left:752.2px;width:300px;text-align:center;top:380.5px;font-size:8.5px;color:#e3e3e3;font-weight:bold;-webkit-text-stroke:0.25px #e3e3e3;">Student</div>
<div class="t" style="left:597.3px;top:397.84px;font-size:8.7px;color:#e3e3e3;font-weight:bold;-webkit-text-stroke:0.25px #e3e3e3;">Actual Rev</div>
<div class="t" style="left:674.6px;top:397.84px;font-size:8.7px;color:#e3e3e3;font-weight:bold;-webkit-text-stroke:0.25px #e3e3e3;">Target Rev</div>
<div class="t" style="left:1051.3px;top:383.74px;font-size:8.7px;color:#e3e3e3;font-weight:bold;-webkit-text-stroke:0.25px #e3e3e3;">Credit Card</div>
<div class="t" style="left:1130.9px;top:383.74px;font-size:8.7px;color:#e3e3e3;font-weight:bold;-webkit-text-stroke:0.25px #e3e3e3;">UPI</div>
<div class="t" style="left:1176.8px;top:383.74px;font-size:8.7px;color:#e3e3e3;font-weight:bold;-webkit-text-stroke:0.25px #e3e3e3;">Bank Transfer</div>
<div class="t" style="left:1121px;top:398.24px;font-size:8.7px;color:#e3e3e3;font-weight:bold;-webkit-text-stroke:0.25px #e3e3e3;">Auto-Debit</div>
<div class="t" style="left:-176.1px;width:300px;text-align:right;top:629.29px;font-size:10.7px;color:#f2f2f2;font-weight:bold;-webkit-text-stroke:0.25px #f2f2f2;"><svg class="rp" width="5.35" height="7.7" viewBox="0 0 13.5 18" preserveAspectRatio="none" style="overflow:visible;margin-right:0.54px"><path d="M0.2,1.25 H13.3 M0.2,5.6 H13.3 M4.5,1.25 C10,1.25 10.9,3.6 10.9,5.6 C10.9,7.6 9.2,9.1 5.2,9.1 H1.4 L11.8,17.2" fill="none" stroke="#f2f2f2" stroke-width="3.7" stroke-linejoin="bevel"/></svg>0</div>
<div class="t" style="left:-176.1px;width:300px;text-align:right;top:570.44px;font-size:10.7px;color:#f2f2f2;font-weight:bold;-webkit-text-stroke:0.25px #f2f2f2;"><svg class="rp" width="5.35" height="7.7" viewBox="0 0 13.5 18" preserveAspectRatio="none" style="overflow:visible;margin-right:0.54px"><path d="M0.2,1.25 H13.3 M0.2,5.6 H13.3 M4.5,1.25 C10,1.25 10.9,3.6 10.9,5.6 C10.9,7.6 9.2,9.1 5.2,9.1 H1.4 L11.8,17.2" fill="none" stroke="#f2f2f2" stroke-width="3.7" stroke-linejoin="bevel"/></svg>500,000</div>
<div class="t" style="left:-176.1px;width:300px;text-align:right;top:511.59px;font-size:10.7px;color:#f2f2f2;font-weight:bold;-webkit-text-stroke:0.25px #f2f2f2;"><svg class="rp" width="5.35" height="7.7" viewBox="0 0 13.5 18" preserveAspectRatio="none" style="overflow:visible;margin-right:0.54px"><path d="M0.2,1.25 H13.3 M0.2,5.6 H13.3 M4.5,1.25 C10,1.25 10.9,3.6 10.9,5.6 C10.9,7.6 9.2,9.1 5.2,9.1 H1.4 L11.8,17.2" fill="none" stroke="#f2f2f2" stroke-width="3.7" stroke-linejoin="bevel"/></svg>1,000,000</div>
<div class="t" style="left:-176.1px;width:300px;text-align:right;top:452.74px;font-size:10.7px;color:#f2f2f2;font-weight:bold;-webkit-text-stroke:0.25px #f2f2f2;"><svg class="rp" width="5.35" height="7.7" viewBox="0 0 13.5 18" preserveAspectRatio="none" style="overflow:visible;margin-right:0.54px"><path d="M0.2,1.25 H13.3 M0.2,5.6 H13.3 M4.5,1.25 C10,1.25 10.9,3.6 10.9,5.6 C10.9,7.6 9.2,9.1 5.2,9.1 H1.4 L11.8,17.2" fill="none" stroke="#f2f2f2" stroke-width="3.7" stroke-linejoin="bevel"/></svg>1,500,000</div>
<div class="t" style="left:-20.5px;width:300px;text-align:center;top:594.2px;font-size:10.5px;color:#f5f5f5;font-weight:bold;-webkit-text-stroke:0.25px #f5f5f5;filter:drop-shadow(0.7px 0 0 #101b1c) drop-shadow(-0.7px 0 0 #101b1c) drop-shadow(0 0.7px 0 #101b1c) drop-shadow(0 -0.7px 0 #101b1c);"><svg class="rp" width="5.25" height="7.56" viewBox="0 0 13.5 18" preserveAspectRatio="none" style="overflow:visible;margin-right:0.53px"><path d="M0.2,1.25 H13.3 M0.2,5.6 H13.3 M4.5,1.25 C10,1.25 10.9,3.6 10.9,5.6 C10.9,7.6 9.2,9.1 5.2,9.1 H1.4 L11.8,17.2" fill="none" stroke="#f5f5f5" stroke-width="3.7" stroke-linejoin="bevel"/></svg>124,586</div>
<div class="t" style="left:10.5px;width:300px;text-align:center;top:582.41px;font-size:10.5px;color:#f5f5f5;font-weight:bold;-webkit-text-stroke:0.25px #f5f5f5;filter:drop-shadow(0.7px 0 0 #101b1c) drop-shadow(-0.7px 0 0 #101b1c) drop-shadow(0 0.7px 0 #101b1c) drop-shadow(0 -0.7px 0 #101b1c);"><svg class="rp" width="5.25" height="7.56" viewBox="0 0 13.5 18" preserveAspectRatio="none" style="overflow:visible;margin-right:0.53px"><path d="M0.2,1.25 H13.3 M0.2,5.6 H13.3 M4.5,1.25 C10,1.25 10.9,3.6 10.9,5.6 C10.9,7.6 9.2,9.1 5.2,9.1 H1.4 L11.8,17.2" fill="none" stroke="#f5f5f5" stroke-width="3.7" stroke-linejoin="bevel"/></svg>224,771</div>
<div class="t" style="left:41.5px;width:300px;text-align:center;top:572.14px;font-size:10.5px;color:#f5f5f5;font-weight:bold;-webkit-text-stroke:0.25px #f5f5f5;filter:drop-shadow(0.7px 0 0 #101b1c) drop-shadow(-0.7px 0 0 #101b1c) drop-shadow(0 0.7px 0 #101b1c) drop-shadow(0 -0.7px 0 #101b1c);"><svg class="rp" width="5.25" height="7.56" viewBox="0 0 13.5 18" preserveAspectRatio="none" style="overflow:visible;margin-right:0.53px"><path d="M0.2,1.25 H13.3 M0.2,5.6 H13.3 M4.5,1.25 C10,1.25 10.9,3.6 10.9,5.6 C10.9,7.6 9.2,9.1 5.2,9.1 H1.4 L11.8,17.2" fill="none" stroke="#f5f5f5" stroke-width="3.7" stroke-linejoin="bevel"/></svg>312,005</div>
<div class="t" style="left:72.5px;width:300px;text-align:center;top:561.52px;font-size:10.5px;color:#f5f5f5;font-weight:bold;-webkit-text-stroke:0.25px #f5f5f5;filter:drop-shadow(0.7px 0 0 #101b1c) drop-shadow(-0.7px 0 0 #101b1c) drop-shadow(0 0.7px 0 #101b1c) drop-shadow(0 -0.7px 0 #101b1c);"><svg class="rp" width="5.25" height="7.56" viewBox="0 0 13.5 18" preserveAspectRatio="none" style="overflow:visible;margin-right:0.53px"><path d="M0.2,1.25 H13.3 M0.2,5.6 H13.3 M4.5,1.25 C10,1.25 10.9,3.6 10.9,5.6 C10.9,7.6 9.2,9.1 5.2,9.1 H1.4 L11.8,17.2" fill="none" stroke="#f5f5f5" stroke-width="3.7" stroke-linejoin="bevel"/></svg>402,190</div>
<div class="t" style="left:103.5px;width:300px;text-align:center;top:547.3px;font-size:10.5px;color:#f5f5f5;font-weight:bold;-webkit-text-stroke:0.25px #f5f5f5;filter:drop-shadow(0.7px 0 0 #101b1c) drop-shadow(-0.7px 0 0 #101b1c) drop-shadow(0 0.7px 0 #101b1c) drop-shadow(0 -0.7px 0 #101b1c);"><svg class="rp" width="5.25" height="7.56" viewBox="0 0 13.5 18" preserveAspectRatio="none" style="overflow:visible;margin-right:0.53px"><path d="M0.2,1.25 H13.3 M0.2,5.6 H13.3 M4.5,1.25 C10,1.25 10.9,3.6 10.9,5.6 C10.9,7.6 9.2,9.1 5.2,9.1 H1.4 L11.8,17.2" fill="none" stroke="#f5f5f5" stroke-width="3.7" stroke-linejoin="bevel"/></svg>523,016</div>
<div class="t" style="left:134.5px;width:300px;text-align:center;top:534.93px;font-size:10.5px;color:#f5f5f5;font-weight:bold;-webkit-text-stroke:0.25px #f5f5f5;filter:drop-shadow(0.7px 0 0 #101b1c) drop-shadow(-0.7px 0 0 #101b1c) drop-shadow(0 0.7px 0 #101b1c) drop-shadow(0 -0.7px 0 #101b1c);"><svg class="rp" width="5.25" height="7.56" viewBox="0 0 13.5 18" preserveAspectRatio="none" style="overflow:visible;margin-right:0.53px"><path d="M0.2,1.25 H13.3 M0.2,5.6 H13.3 M4.5,1.25 C10,1.25 10.9,3.6 10.9,5.6 C10.9,7.6 9.2,9.1 5.2,9.1 H1.4 L11.8,17.2" fill="none" stroke="#f5f5f5" stroke-width="3.7" stroke-linejoin="bevel"/></svg>628,122</div>
<div class="t" style="left:165.5px;width:300px;text-align:center;top:520.19px;font-size:10.5px;color:#f5f5f5;font-weight:bold;-webkit-text-stroke:0.25px #f5f5f5;filter:drop-shadow(0.7px 0 0 #101b1c) drop-shadow(-0.7px 0 0 #101b1c) drop-shadow(0 0.7px 0 #101b1c) drop-shadow(0 -0.7px 0 #101b1c);"><svg class="rp" width="5.25" height="7.56" viewBox="0 0 13.5 18" preserveAspectRatio="none" style="overflow:visible;margin-right:0.53px"><path d="M0.2,1.25 H13.3 M0.2,5.6 H13.3 M4.5,1.25 C10,1.25 10.9,3.6 10.9,5.6 C10.9,7.6 9.2,9.1 5.2,9.1 H1.4 L11.8,17.2" fill="none" stroke="#f5f5f5" stroke-width="3.7" stroke-linejoin="bevel"/></svg>753,361</div>
<div class="t" style="left:196.5px;width:300px;text-align:center;top:507.5px;font-size:10.5px;color:#f5f5f5;font-weight:bold;-webkit-text-stroke:0.25px #f5f5f5;filter:drop-shadow(0.7px 0 0 #101b1c) drop-shadow(-0.7px 0 0 #101b1c) drop-shadow(0 0.7px 0 #101b1c) drop-shadow(0 -0.7px 0 #101b1c);"><svg class="rp" width="5.25" height="7.56" viewBox="0 0 13.5 18" preserveAspectRatio="none" style="overflow:visible;margin-right:0.53px"><path d="M0.2,1.25 H13.3 M0.2,5.6 H13.3 M4.5,1.25 C10,1.25 10.9,3.6 10.9,5.6 C10.9,7.6 9.2,9.1 5.2,9.1 H1.4 L11.8,17.2" fill="none" stroke="#f5f5f5" stroke-width="3.7" stroke-linejoin="bevel"/></svg>861,150</div>
<div class="t" style="left:227.5px;width:300px;text-align:center;top:494.67px;font-size:10.5px;color:#f5f5f5;font-weight:bold;-webkit-text-stroke:0.25px #f5f5f5;filter:drop-shadow(0.7px 0 0 #101b1c) drop-shadow(-0.7px 0 0 #101b1c) drop-shadow(0 0.7px 0 #101b1c) drop-shadow(0 -0.7px 0 #101b1c);"><svg class="rp" width="5.25" height="7.56" viewBox="0 0 13.5 18" preserveAspectRatio="none" style="overflow:visible;margin-right:0.53px"><path d="M0.2,1.25 H13.3 M0.2,5.6 H13.3 M4.5,1.25 C10,1.25 10.9,3.6 10.9,5.6 C10.9,7.6 9.2,9.1 5.2,9.1 H1.4 L11.8,17.2" fill="none" stroke="#f5f5f5" stroke-width="3.7" stroke-linejoin="bevel"/></svg>970,188</div>
<div class="t" style="left:258.5px;width:300px;text-align:center;top:479.76px;font-size:10.5px;color:#f5f5f5;font-weight:bold;-webkit-text-stroke:0.25px #f5f5f5;filter:drop-shadow(0.7px 0 0 #101b1c) drop-shadow(-0.7px 0 0 #101b1c) drop-shadow(0 0.7px 0 #101b1c) drop-shadow(0 -0.7px 0 #101b1c);"><svg class="rp" width="5.25" height="7.56" viewBox="0 0 13.5 18" preserveAspectRatio="none" style="overflow:visible;margin-right:0.53px"><path d="M0.2,1.25 H13.3 M0.2,5.6 H13.3 M4.5,1.25 C10,1.25 10.9,3.6 10.9,5.6 C10.9,7.6 9.2,9.1 5.2,9.1 H1.4 L11.8,17.2" fill="none" stroke="#f5f5f5" stroke-width="3.7" stroke-linejoin="bevel"/></svg>1,096,900</div>
<div class="t" style="left:289.5px;width:300px;text-align:center;top:466.18px;font-size:10.5px;color:#f5f5f5;font-weight:bold;-webkit-text-stroke:0.25px #f5f5f5;filter:drop-shadow(0.7px 0 0 #101b1c) drop-shadow(-0.7px 0 0 #101b1c) drop-shadow(0 0.7px 0 #101b1c) drop-shadow(0 -0.7px 0 #101b1c);"><svg class="rp" width="5.25" height="7.56" viewBox="0 0 13.5 18" preserveAspectRatio="none" style="overflow:visible;margin-right:0.53px"><path d="M0.2,1.25 H13.3 M0.2,5.6 H13.3 M4.5,1.25 C10,1.25 10.9,3.6 10.9,5.6 C10.9,7.6 9.2,9.1 5.2,9.1 H1.4 L11.8,17.2" fill="none" stroke="#f5f5f5" stroke-width="3.7" stroke-linejoin="bevel"/></svg>1,212,240</div>
<div class="t" style="left:469.8px;width:300px;text-align:center;top:513.76px;font-size:8.3px;color:#dcfff8;font-weight:bold;-webkit-text-stroke:0.25px #dcfff8;"><svg class="rp" width="4.15" height="5.98" viewBox="0 0 13.5 18" preserveAspectRatio="none" style="overflow:visible;margin-right:0.42px"><path d="M0.2,1.25 H13.3 M0.2,5.6 H13.3 M4.5,1.25 C10,1.25 10.9,3.6 10.9,5.6 C10.9,7.6 9.2,9.1 5.2,9.1 H1.4 L11.8,17.2" fill="none" stroke="#dcfff8" stroke-width="3.7" stroke-linejoin="bevel"/></svg>67,186</div>
<div class="t" style="left:512.5px;width:300px;text-align:center;top:520.82px;font-size:8.3px;color:#ffeedd;font-weight:bold;-webkit-text-stroke:0.25px #ffeedd;"><svg class="rp" width="4.15" height="5.98" viewBox="0 0 13.5 18" preserveAspectRatio="none" style="overflow:visible;margin-right:0.42px"><path d="M0.2,1.25 H13.3 M0.2,5.6 H13.3 M4.5,1.25 C10,1.25 10.9,3.6 10.9,5.6 C10.9,7.6 9.2,9.1 5.2,9.1 H1.4 L11.8,17.2" fill="none" stroke="#ffeedd" stroke-width="3.7" stroke-linejoin="bevel"/></svg>62,677</div>
<div class="t" style="left:491.15px;width:300px;text-align:center;top:619.88px;font-size:10.3px;color:#f0f0f0;font-weight:bold;-webkit-text-stroke:0.25px #f0f0f0;">Downtown</div>
<div class="t" style="left:602.3px;width:300px;text-align:center;top:498.24px;font-size:8.3px;color:#dcfff8;font-weight:bold;-webkit-text-stroke:0.25px #dcfff8;"><svg class="rp" width="4.15" height="5.98" viewBox="0 0 13.5 18" preserveAspectRatio="none" style="overflow:visible;margin-right:0.42px"><path d="M0.2,1.25 H13.3 M0.2,5.6 H13.3 M4.5,1.25 C10,1.25 10.9,3.6 10.9,5.6 C10.9,7.6 9.2,9.1 5.2,9.1 H1.4 L11.8,17.2" fill="none" stroke="#dcfff8" stroke-width="3.7" stroke-linejoin="bevel"/></svg>77,095</div>
<div class="t" style="left:645px;width:300px;text-align:center;top:476.31px;font-size:8.3px;color:#ffeedd;font-weight:bold;-webkit-text-stroke:0.25px #ffeedd;"><svg class="rp" width="4.15" height="5.98" viewBox="0 0 13.5 18" preserveAspectRatio="none" style="overflow:visible;margin-right:0.42px"><path d="M0.2,1.25 H13.3 M0.2,5.6 H13.3 M4.5,1.25 C10,1.25 10.9,3.6 10.9,5.6 C10.9,7.6 9.2,9.1 5.2,9.1 H1.4 L11.8,17.2" fill="none" stroke="#ffeedd" stroke-width="3.7" stroke-linejoin="bevel"/></svg>91,103</div>
<div class="t" style="left:623.65px;width:300px;text-align:center;top:619.88px;font-size:10.3px;color:#f0f0f0;font-weight:bold;-webkit-text-stroke:0.25px #f0f0f0;">Westside</div>
<div class="t" style="left:734.8px;width:300px;text-align:center;top:522.14px;font-size:8.3px;color:#dcfff8;font-weight:bold;-webkit-text-stroke:0.25px #dcfff8;"><svg class="rp" width="4.15" height="5.98" viewBox="0 0 13.5 18" preserveAspectRatio="none" style="overflow:visible;margin-right:0.42px"><path d="M0.2,1.25 H13.3 M0.2,5.6 H13.3 M4.5,1.25 C10,1.25 10.9,3.6 10.9,5.6 C10.9,7.6 9.2,9.1 5.2,9.1 H1.4 L11.8,17.2" fill="none" stroke="#dcfff8" stroke-width="3.7" stroke-linejoin="bevel"/></svg>61,836</div>
<div class="t" style="left:777.5px;width:300px;text-align:center;top:535.37px;font-size:8.3px;color:#ffeedd;font-weight:bold;-webkit-text-stroke:0.25px #ffeedd;"><svg class="rp" width="4.15" height="5.98" viewBox="0 0 13.5 18" preserveAspectRatio="none" style="overflow:visible;margin-right:0.42px"><path d="M0.2,1.25 H13.3 M0.2,5.6 H13.3 M4.5,1.25 C10,1.25 10.9,3.6 10.9,5.6 C10.9,7.6 9.2,9.1 5.2,9.1 H1.4 L11.8,17.2" fill="none" stroke="#ffeedd" stroke-width="3.7" stroke-linejoin="bevel"/></svg>53,386</div>
<div class="t" style="left:756.15px;width:300px;text-align:center;top:619.88px;font-size:10.3px;color:#f0f0f0;font-weight:bold;-webkit-text-stroke:0.25px #f0f0f0;">Eastside</div>
<div class="t" style="left:867.3px;width:300px;text-align:center;top:546.92px;font-size:8.3px;color:#dcfff8;font-weight:bold;-webkit-text-stroke:0.25px #dcfff8;"><svg class="rp" width="4.15" height="5.98" viewBox="0 0 13.5 18" preserveAspectRatio="none" style="overflow:visible;margin-right:0.42px"><path d="M0.2,1.25 H13.3 M0.2,5.6 H13.3 M4.5,1.25 C10,1.25 10.9,3.6 10.9,5.6 C10.9,7.6 9.2,9.1 5.2,9.1 H1.4 L11.8,17.2" fill="none" stroke="#dcfff8" stroke-width="3.7" stroke-linejoin="bevel"/></svg>46,009</div>
<div class="t" style="left:910px;width:300px;text-align:center;top:533px;font-size:8.3px;color:#ffeedd;font-weight:bold;-webkit-text-stroke:0.25px #ffeedd;"><svg class="rp" width="4.15" height="5.98" viewBox="0 0 13.5 18" preserveAspectRatio="none" style="overflow:visible;margin-right:0.42px"><path d="M0.2,1.25 H13.3 M0.2,5.6 H13.3 M4.5,1.25 C10,1.25 10.9,3.6 10.9,5.6 C10.9,7.6 9.2,9.1 5.2,9.1 H1.4 L11.8,17.2" fill="none" stroke="#ffeedd" stroke-width="3.7" stroke-linejoin="bevel"/></svg>54,898</div>
<div class="t" style="left:888.65px;width:300px;text-align:center;top:619.88px;font-size:10.3px;color:#f0f0f0;font-weight:bold;-webkit-text-stroke:0.25px #f0f0f0;">North Hub</div>
<div class="t" style="left:999.8px;width:300px;text-align:center;top:525.2px;font-size:8.3px;color:#dcfff8;font-weight:bold;-webkit-text-stroke:0.25px #dcfff8;"><svg class="rp" width="4.15" height="5.98" viewBox="0 0 13.5 18" preserveAspectRatio="none" style="overflow:visible;margin-right:0.42px"><path d="M0.2,1.25 H13.3 M0.2,5.6 H13.3 M4.5,1.25 C10,1.25 10.9,3.6 10.9,5.6 C10.9,7.6 9.2,9.1 5.2,9.1 H1.4 L11.8,17.2" fill="none" stroke="#dcfff8" stroke-width="3.7" stroke-linejoin="bevel"/></svg>59,879</div>
<div class="t" style="left:1042.5px;width:300px;text-align:center;top:534.33px;font-size:8.3px;color:#ffeedd;font-weight:bold;-webkit-text-stroke:0.25px #ffeedd;"><svg class="rp" width="4.15" height="5.98" viewBox="0 0 13.5 18" preserveAspectRatio="none" style="overflow:visible;margin-right:0.42px"><path d="M0.2,1.25 H13.3 M0.2,5.6 H13.3 M4.5,1.25 C10,1.25 10.9,3.6 10.9,5.6 C10.9,7.6 9.2,9.1 5.2,9.1 H1.4 L11.8,17.2" fill="none" stroke="#ffeedd" stroke-width="3.7" stroke-linejoin="bevel"/></svg>54,053</div>
<div class="t" style="left:1021.15px;width:300px;text-align:center;top:619.88px;font-size:10.3px;color:#f0f0f0;font-weight:bold;-webkit-text-stroke:0.25px #f0f0f0;">South Point</div>
</body></html>
